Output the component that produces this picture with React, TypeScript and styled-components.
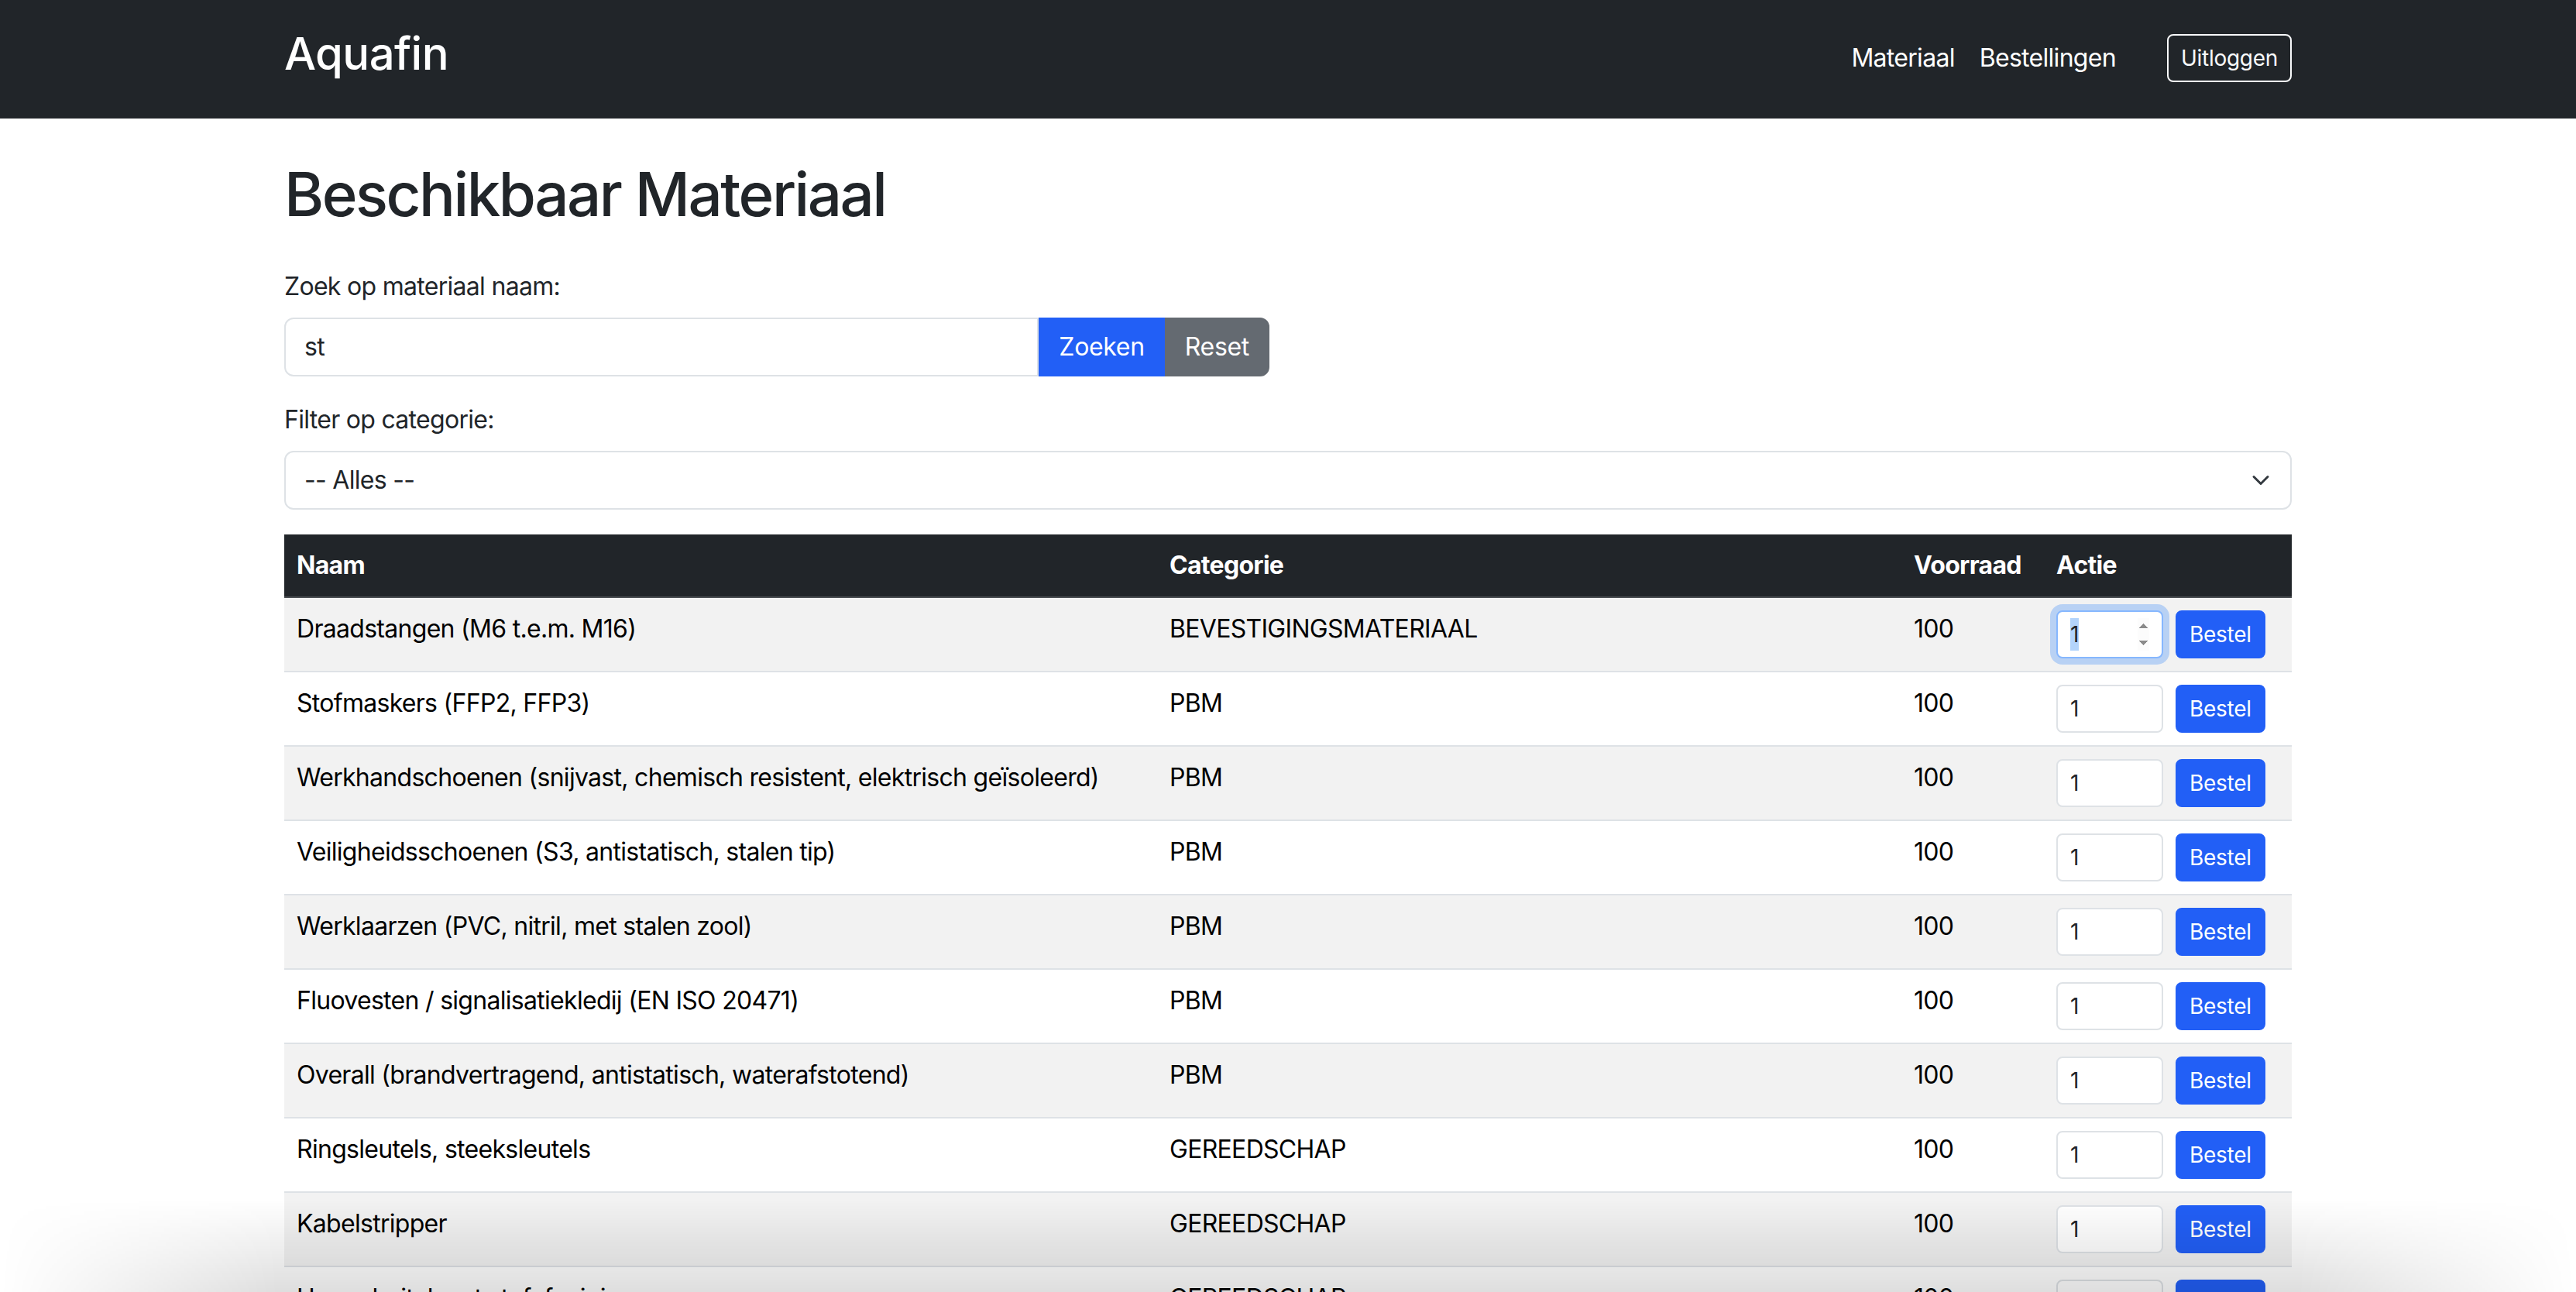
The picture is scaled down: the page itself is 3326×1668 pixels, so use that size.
import { useEffect, useRef } from "react";
import styled, { createGlobalStyle, css } from "styled-components";

const GlobalStyle = createGlobalStyle`
    * { box-sizing: border-box; }
    body {
        margin: 0;
        font-family: Inter, "Noto Sans", "Liberation Sans", sans-serif;
        font-size: 32px;
        line-height: 1.5;
        letter-spacing: -0.022em;
        color: #212529;
        background: #fff;
    }
`;

const Navbar = styled.nav`
    background-color: #212529;
    height: 153px;
`;

const Container = styled.div`
    max-width: 2640px;
    margin: 0 auto;
    padding: 0 24px;
`;

const NavInner = styled(Container)`
    height: 100%;
    display: flex;
    align-items: center;
    justify-content: space-between;
`;

const Brand = styled.a`
    color: #fff;
    font-size: 58px;
    font-weight: 500;
    line-height: 1.2;
    letter-spacing: -0.01em;
    text-decoration: none;
    margin-bottom: 14px;
`;

const NavRight = styled.div`
    display: flex;
    align-items: center;
    margin-bottom: 4px;
`;

const NavLink = styled.a`
    color: #fff;
    font-size: 32px;
    padding: 16px;
    text-decoration: none;
`;

const LogoutButton = styled.button`
    margin-left: 50px;
    background: transparent;
    color: #f8f9fa;
    border: 2px solid #f8f9fa;
    border-radius: 8px;
    font-family: inherit;
    font-size: 28px;
    line-height: 1.5;
    letter-spacing: -0.01em;
    padding: 8px 16px;
`;

const Main = styled(Container)`
    padding-top: 51px;
`;

const Title = styled.h1`
    margin: 0 0 48px;
    font-size: 78px;
    font-weight: 500;
    line-height: 1.2;
    letter-spacing: -0.032em;
`;

const Label = styled.label`
    display: block;
    margin-bottom: 16px;
`;

const InputGroup = styled.div`
    display: flex;
    width: 1272px;
    margin-bottom: 32px;
`;

const TextInput = styled.input`
    flex: 1;
    min-width: 0;
    font-family: inherit;
    font-size: 32px;
    line-height: 1.5;
    letter-spacing: inherit;
    color: #212529;
    padding: 12px 24px;
    border: 2px solid #dee2e6;
    border-radius: 12px 0 0 12px;
    outline: none;
`;

const GroupButton = styled.button<{ $variant: "primary" | "secondary"; $last?: boolean }>`
    font-family: inherit;
    font-size: 32px;
    line-height: 1.5;
    letter-spacing: -0.01em;
    color: #fff;
    padding: 12px 24px;
    border: 2px solid ${(p) => (p.$variant === "primary" ? "#225ff6" : "#646a71")};
    background-color: ${(p) => (p.$variant === "primary" ? "#225ff6" : "#646a71")};
    border-radius: ${(p) => (p.$last ? "0 12px 12px 0" : "0")};
`;

const SelectWrap = styled.div`
    position: relative;
    margin-bottom: 32px;
`;

const Select = styled.select`
    display: block;
    width: 100%;
    appearance: none;
    font-family: inherit;
    font-size: 32px;
    line-height: 1.5;
    letter-spacing: inherit;
    color: #212529;
    background: #fff;
    padding: 12px 72px 12px 24px;
    border: 2px solid #dee2e6;
    border-radius: 12px;
    outline: none;
`;

const Chevron = styled.svg`
    position: absolute;
    right: 24px;
    top: 50%;
    width: 32px;
    height: 24px;
    transform: translateY(-50%);
    pointer-events: none;
`;

const Table = styled.table`
    width: 100%;
    border-collapse: collapse;
    vertical-align: top;
    color: #000;
`;

const Th = styled.th<{ $width: number }>`
    width: ${(p) => p.$width}px;
    text-align: left;
    padding: 16px;
    background: #212529;
    color: #fff;
    font-weight: 700;
    border-bottom: 2px solid #4a4e52;
`;

const Row = styled.tr<{ $striped: boolean }>`
    background: ${(p) => (p.$striped ? "#f2f2f2" : "#fff")};
    border-bottom: 2px solid #dee2e6;
`;

const Td = styled.td`
    padding: 16px;
    vertical-align: top;
`;

const ActionCell = styled.div`
    display: flex;
    gap: 16px;
`;

const QtyInput = styled.input<{ $active?: boolean }>`
    width: 138px;
    font-family: inherit;
    font-size: 28px;
    line-height: 1.5;
    color: #212529;
    padding: 8px 16px;
    border: 2px solid #dee2e6;
    border-radius: 8px;
    background: #fff;
    outline: none;
    &::-webkit-inner-spin-button,
    &::-webkit-outer-spin-button {
        opacity: 0;
    }
    ${(p) =>
        p.$active &&
        css`
            border-color: #86b7fe;
            box-shadow: 0 0 0 8px rgba(13, 110, 253, 0.25);
            &::-webkit-inner-spin-button {
                opacity: 1;
            }
            &::selection {
                background: #b3d4fc;
            }
        `}
`;

const OrderButton = styled.button`
    font-family: inherit;
    font-size: 28px;
    line-height: 1.5;
    letter-spacing: -0.01em;
    color: #fff;
    padding: 8px 16px;
    border: 2px solid #225ff6;
    background-color: #225ff6;
    border-radius: 8px;
`;

const BottomShade = styled.div`
    position: fixed;
    left: 0;
    right: 0;
    bottom: 0;
    height: 120px;
    pointer-events: none;
    background: linear-gradient(to bottom, rgba(0, 0, 0, 0), rgba(0, 0, 0, 0.13));
    -webkit-mask-image: linear-gradient(to right, transparent, #000 360px, #000 calc(100% - 360px), transparent);
    mask-image: linear-gradient(to right, transparent, #000 360px, #000 calc(100% - 360px), transparent);
`;

const materials = [
    { name: "Draadstangen (M6 t.e.m. M16)", category: "BEVESTIGINGSMATERIAAL" },
    { name: "Stofmaskers (FFP2, FFP3)", category: "PBM" },
    { name: "Werkhandschoenen (snijvast, chemisch resistent, elektrisch geïsoleerd)", category: "PBM" },
    { name: "Veiligheidsschoenen (S3, antistatisch, stalen tip)", category: "PBM" },
    { name: "Werklaarzen (PVC, nitril, met stalen zool)", category: "PBM" },
    { name: "Fluovesten / signalisatiekledij (EN ISO 20471)", category: "PBM" },
    { name: "Overall (brandvertragend, antistatisch, waterafstotend)", category: "PBM" },
    { name: "Ringsleutels, steeksleutels", category: "GEREEDSCHAP" },
    { name: "Kabelstripper", category: "GEREEDSCHAP" },
    { name: "Hamerbeitel met stofafzuiging", category: "GEREEDSCHAP" },
    { name: "Schroevendraaierset", category: "GEREEDSCHAP" },
];

export default function App() {
    const firstQty = useRef<HTMLInputElement>(null);

    useEffect(() => {
        firstQty.current?.focus();
        firstQty.current?.select();
    }, []);

    return (
        <>
            <GlobalStyle />
            <Navbar>
                <NavInner>
                    <Brand href="#">Aquafin</Brand>
                    <NavRight>
                        <NavLink href="#">Materiaal</NavLink>
                        <NavLink href="#">Bestellingen</NavLink>
                        <LogoutButton>Uitloggen</LogoutButton>
                    </NavRight>
                </NavInner>
            </Navbar>
            <Main>
                <Title>Beschikbaar Materiaal</Title>
                <Label>Zoek op materiaal naam:</Label>
                <InputGroup>
                    <TextInput type="text" defaultValue="st" />
                    <GroupButton $variant="primary">Zoeken</GroupButton>
                    <GroupButton $variant="secondary" $last>Reset</GroupButton>
                </InputGroup>
                <Label>Filter op categorie:</Label>
                <SelectWrap>
                    <Select defaultValue="">
                        <option value="">-- Alles --</option>
                        <option value="PBM">PBM</option>
                        <option value="GEREEDSCHAP">GEREEDSCHAP</option>
                    </Select>
                    <Chevron viewBox="0 0 16 16">
                        <path fill="none" stroke="#343a40" strokeLinecap="round" strokeLinejoin="round" strokeWidth="2" d="m2 5 6 6 6-6" />
                    </Chevron>
                </SelectWrap>
                <Table>
                    <thead>
                        <tr>
                            <Th $width={1127}>Naam</Th>
                            <Th $width={961}>Categorie</Th>
                            <Th $width={184}>Voorraad</Th>
                            <Th $width={320}>Actie</Th>
                        </tr>
                    </thead>
                    <tbody>
                        {materials.map((m, i) => (
                            <Row key={m.name} $striped={i % 2 === 0}>
                                <Td>{m.name}</Td>
                                <Td>{m.category}</Td>
                                <Td>100</Td>
                                <Td>
                                    <ActionCell>
                                        <QtyInput
                                            ref={i === 0 ? firstQty : undefined}
                                            type="number"
                                            min={1}
                                            defaultValue={1}
                                            $active={i === 0}
                                        />
                                        <OrderButton>Bestel</OrderButton>
                                    </ActionCell>
                                </Td>
                            </Row>
                        ))}
                    </tbody>
                </Table>
            </Main>
            <BottomShade />
        </>
    );
}
